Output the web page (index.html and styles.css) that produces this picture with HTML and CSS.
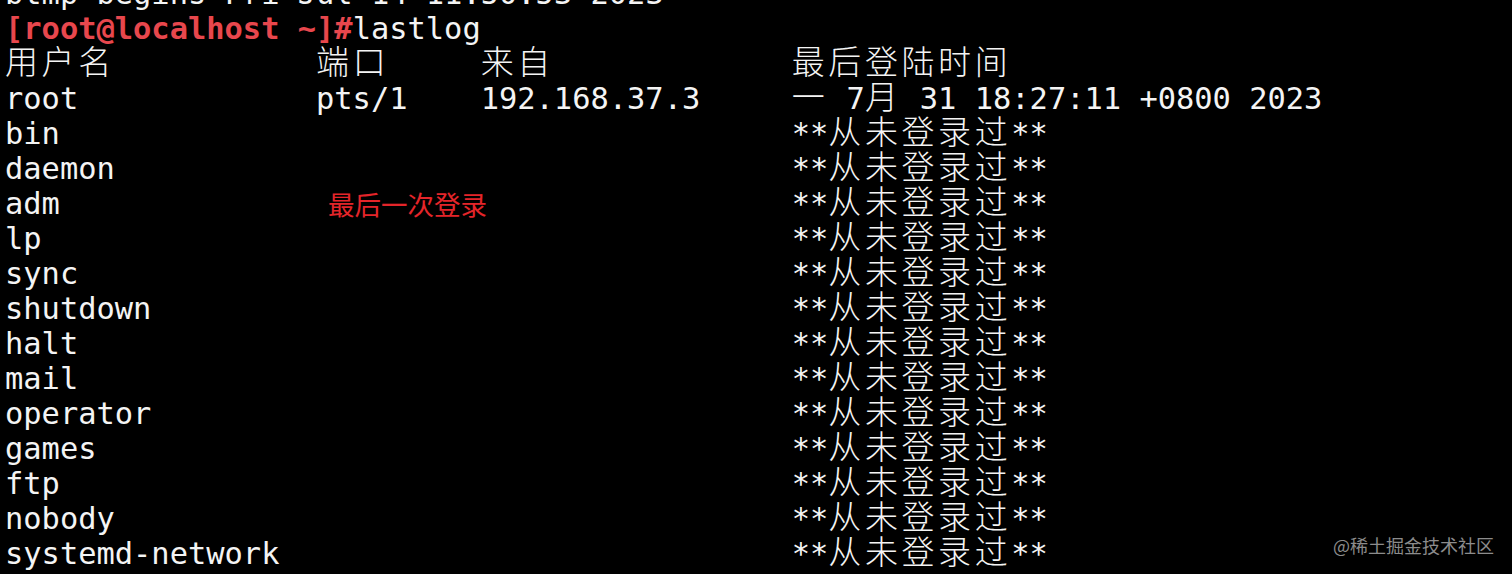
FILE: index.html
```html
<!DOCTYPE html>
<html lang="zh">
<head>
<meta charset="utf-8">
<title>lastlog</title>
<link rel="stylesheet" href="styles.css">
</head>
<body>
<div class="term">
  <div class="row"><span>btmp begins Fri Jul 14 11:50:53 2023</span></div>
  <div class="row"><span class="prompt">[root@localhost ~]#</span><span>lastlog</span></div>
  <div class="row"><span class="c1"><span class="w">用户名</span></span><span class="c2"><span class="w">端口</span></span><span class="c3"><span class="w">来自</span></span><span class="c4"><span class="w">最后登陆时间</span></span></div>
  <div class="row"><span class="c1">root</span><span class="c2">pts/1</span><span class="c3">192.168.37.3</span><span class="c4"><span class="w">一</span> 7<span class="w">月</span> 31 18:27:11 +0800 2023</span></div>
  <div class="row"><span class="c1">bin</span><span class="c2"></span><span class="c3"></span><span class="c4">**<span class="w">从未登录过</span>**</span></div>
  <div class="row"><span class="c1">daemon</span><span class="c2"></span><span class="c3"></span><span class="c4">**<span class="w">从未登录过</span>**</span></div>
  <div class="row"><span class="c1">adm</span><span class="c2"></span><span class="c3"></span><span class="c4">**<span class="w">从未登录过</span>**</span></div>
  <div class="row"><span class="c1">lp</span><span class="c2"></span><span class="c3"></span><span class="c4">**<span class="w">从未登录过</span>**</span></div>
  <div class="row"><span class="c1">sync</span><span class="c2"></span><span class="c3"></span><span class="c4">**<span class="w">从未登录过</span>**</span></div>
  <div class="row"><span class="c1">shutdown</span><span class="c2"></span><span class="c3"></span><span class="c4">**<span class="w">从未登录过</span>**</span></div>
  <div class="row"><span class="c1">halt</span><span class="c2"></span><span class="c3"></span><span class="c4">**<span class="w">从未登录过</span>**</span></div>
  <div class="row"><span class="c1">mail</span><span class="c2"></span><span class="c3"></span><span class="c4">**<span class="w">从未登录过</span>**</span></div>
  <div class="row"><span class="c1">operator</span><span class="c2"></span><span class="c3"></span><span class="c4">**<span class="w">从未登录过</span>**</span></div>
  <div class="row"><span class="c1">games</span><span class="c2"></span><span class="c3"></span><span class="c4">**<span class="w">从未登录过</span>**</span></div>
  <div class="row"><span class="c1">ftp</span><span class="c2"></span><span class="c3"></span><span class="c4">**<span class="w">从未登录过</span>**</span></div>
  <div class="row"><span class="c1">nobody</span><span class="c2"></span><span class="c3"></span><span class="c4">**<span class="w">从未登录过</span>**</span></div>
  <div class="row"><span class="c1">systemd-network</span><span class="c2"></span><span class="c3"></span><span class="c4">**<span class="w">从未登录过</span>**</span></div>
</div>
<div class="note">最后一次登录</div>
<div class="mark">@稀土掘金技术社区</div>
</body>
</html>
```

FILE: styles.css
```css
html, body {
  margin: 0;
  padding: 0;
  background: #000;
  width: 1512px;
  height: 574px;
  overflow: hidden;
  position: relative;
}
.term {
  margin-top: -24px;
  padding-left: 5px;
  font-family: "DejaVu Sans Mono", "Noto Sans CJK SC", monospace;
  font-size: 30.4px;
  line-height: 35px;
  color: #f4f4f4;
}
.row {
  display: flex;
  height: 35px;
  white-space: pre;
}
.c1 { width: 17ch; flex: none; }
.c2 { width: 9ch; flex: none; }
.c3 { width: 17ch; flex: none; }
.c4 { flex: none; }
.w {
  font-size: 33px;
  line-height: 30px;
  letter-spacing: 3.6px;
  font-weight: 300;
}
.prompt {
  color: #e8474d;
  font-weight: bold;
}
.note {
  position: absolute;
  left: 328px;
  top: 186px;
  font-family: "Noto Sans CJK SC", sans-serif;
  font-size: 26.5px;
  line-height: 36px;
  color: #e4252a;
}
.mark {
  position: absolute;
  left: 1333px;
  top: 532px;
  font-family: "Noto Sans CJK SC", sans-serif;
  font-size: 18px;
  line-height: 26px;
  color: #8c8c8c;
}
```
